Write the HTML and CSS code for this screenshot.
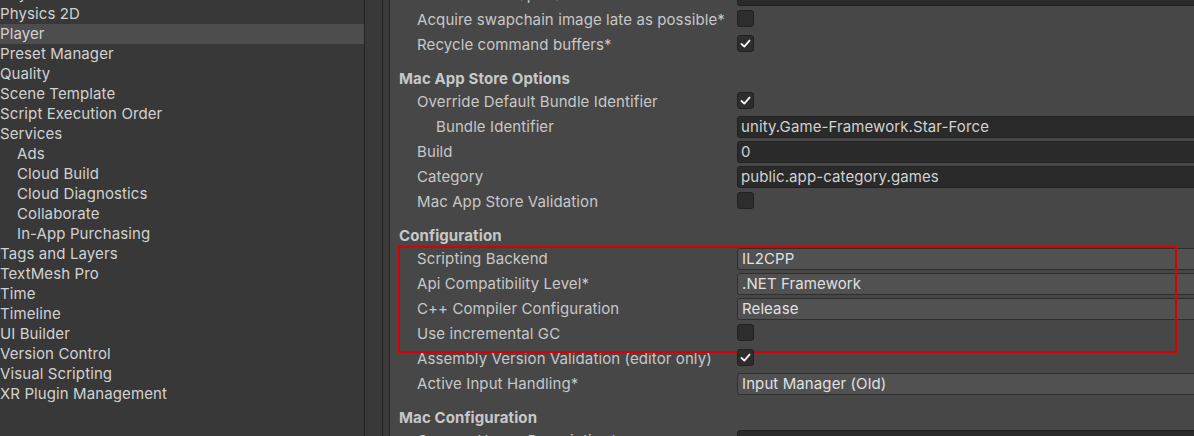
FILE: index.html
```html
<!DOCTYPE html>
<html lang="en">
<head>
<meta charset="utf-8">
<title>Project Settings - Player</title>
<link rel="stylesheet" href="styles.css">
</head>
<body>
<div class="window">
  <aside class="sidebar">
    <ul class="nav">
      <li class="nav-item">Physics</li>
      <li class="nav-item">Physics 2D</li>
      <li class="nav-item is-selected">Player</li>
      <li class="nav-item">Preset Manager</li>
      <li class="nav-item">Quality</li>
      <li class="nav-item">Scene Template</li>
      <li class="nav-item">Script Execution Order</li>
      <li class="nav-item">Services</li>
      <li class="nav-item nav-child">Ads</li>
      <li class="nav-item nav-child">Cloud Build</li>
      <li class="nav-item nav-child">Cloud Diagnostics</li>
      <li class="nav-item nav-child">Collaborate</li>
      <li class="nav-item nav-child">In-App Purchasing</li>
      <li class="nav-item">Tags and Layers</li>
      <li class="nav-item">TextMesh Pro</li>
      <li class="nav-item">Time</li>
      <li class="nav-item">Timeline</li>
      <li class="nav-item">UI Builder</li>
      <li class="nav-item">Version Control</li>
      <li class="nav-item">Visual Scripting</li>
      <li class="nav-item">XR Plugin Management</li>
    </ul>
  </aside>
  <div class="splitter"></div>
  <div class="gutter"></div>
  <main class="inspector">
    <div class="content">
      <div class="row"><span class="label">Number of swapchain buffers*</span><div class="field text-field">3</div></div>
      <div class="row"><span class="label">Acquire swapchain image late as possible*</span><div class="checkbox"></div></div>
      <div class="row"><span class="label">Recycle command buffers*</span><div class="checkbox is-checked"><svg viewBox="0 0 17 17" width="17" height="17"><polyline points="4.5,9 7.3,11.6 12.5,5.6" fill="none" stroke="#f2f2f2" stroke-width="1.9" stroke-linecap="round" stroke-linejoin="round"/></svg></div></div>

      <h3 class="section-header">Mac App Store Options</h3>
      <div class="row"><span class="label">Override Default Bundle Identifier</span><div class="checkbox is-checked"><svg viewBox="0 0 17 17" width="17" height="17"><polyline points="4.5,9 7.3,11.6 12.5,5.6" fill="none" stroke="#f2f2f2" stroke-width="1.9" stroke-linecap="round" stroke-linejoin="round"/></svg></div></div>
      <div class="row"><span class="label label-indent">Bundle Identifier</span><div class="field text-field">unity.Game-Framework.Star-Force</div></div>
      <div class="row"><span class="label">Build</span><div class="field text-field">0</div></div>
      <div class="row"><span class="label">Category</span><div class="field text-field">public.app-category.games</div></div>
      <div class="row"><span class="label">Mac App Store Validation</span><div class="checkbox"></div></div>

      <h3 class="section-header">Configuration</h3>
      <div class="highlight-group">
        <div class="row"><span class="label">Scripting Backend</span><div class="field dropdown">IL2CPP</div></div>
        <div class="row"><span class="label">Api Compatibility Level*</span><div class="field dropdown">.NET Framework</div></div>
        <div class="row"><span class="label">C++ Compiler Configuration</span><div class="field dropdown">Release</div></div>
        <div class="row"><span class="label">Use incremental GC</span><div class="checkbox"></div></div>
      </div>
      <div class="row"><span class="label">Assembly Version Validation (editor only)</span><div class="checkbox is-checked"><svg viewBox="0 0 17 17" width="17" height="17"><polyline points="4.5,9 7.3,11.6 12.5,5.6" fill="none" stroke="#f2f2f2" stroke-width="1.9" stroke-linecap="round" stroke-linejoin="round"/></svg></div></div>
      <div class="row"><span class="label">Active Input Handling*</span><div class="field dropdown">Input Manager (Old)</div></div>

      <h3 class="section-header">Mac Configuration</h3>
      <div class="row"><span class="label">Camera Usage Description*</span><div class="field text-field"></div></div>
    </div>
  </main>
</div>
</body>
</html>
```

FILE: styles.css
```css
* { box-sizing: border-box; }

html, body {
  margin: 0;
  padding: 0;
  width: 1194px;
  height: 436px;
  overflow: hidden;
  background: #383838;
}

body {
  font-family: Inter, "Noto Sans", "DejaVu Sans", sans-serif;
  font-size: 15px;
  letter-spacing: 0.1px;
  color: #c8c8c8;
}

.window {
  display: flex;
  height: 436px;
  overflow: hidden;
}

/* ---- left list ---- */
.sidebar {
  width: 364px;
  flex: none;
  background: #383838;
  overflow: hidden;
}

.nav {
  list-style: none;
  margin: -16px 0 0 0;
  padding: 0;
}

.nav-item {
  height: 20px;
  line-height: 20px;
  padding-left: 0;
  white-space: nowrap;
  color: #d2d2d2;
}

.nav-child { padding-left: 17px; }

.is-selected { background: #4d4d4d; }

.splitter {
  width: 19px;
  flex: none;
  background: #393939;
  border-left: 1px solid #232323;
  border-right: 1px solid #232323;
}

.gutter {
  width: 7px;
  flex: none;
  background: #3b3b3b;
  border-right: 1px solid #262626;
}

/* ---- inspector ---- */
.inspector {
  flex: 1;
  min-width: 0;
  background: #474747;
  overflow: hidden;
}

.content {
  margin-top: -18px;
}

.row {
  height: 25px;
  display: grid;
  grid-template-columns: 347px 480px;
  align-items: center;
}

.label {
  padding-left: 27px;
  white-space: nowrap;
  color: #c8c8c8;
}

.label-indent { padding-left: 46px; }

.section-header {
  margin: 0;
  height: 32px;
  padding: 10px 0 0 9px;
  line-height: 23px;
  font-size: 15px;
  font-weight: 700;
  color: #c8c8c8;
}

.field {
  height: 22px;
  line-height: 20px;
  border-radius: 3px;
  white-space: nowrap;
  overflow: hidden;
}

.text-field {
  background: #2a2a2a;
  border: 1px solid #212121;
  padding-left: 3px;
  color: #d2d2d2;
}

.dropdown {
  background: #515151;
  border: 1px solid #2f2f2f;
  padding-left: 4px;
  color: #e0e0e0;
}

.checkbox {
  width: 17px;
  height: 17px;
  border-radius: 3px;
  background: #2d2d2d;
  border: 1px solid #212121;
  position: relative;
  margin-top: -3px;
}

.checkbox svg {
  position: absolute;
  left: -1px;
  top: -1px;
}

.highlight-group {
  position: relative;
}

.highlight-group::after {
  content: "";
  position: absolute;
  top: 0;
  left: 8px;
  width: 775px;
  height: 103px;
  border: 2px solid #d80000;
  pointer-events: none;
}
```
